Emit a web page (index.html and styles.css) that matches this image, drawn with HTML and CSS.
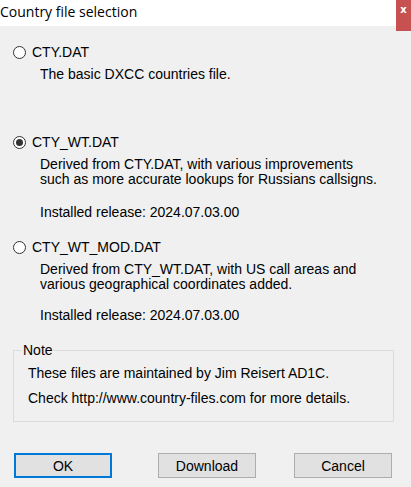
FILE: index.html
```html
<!DOCTYPE html>
<html>
<head>
<meta charset="utf-8">
<link rel="stylesheet" href="styles.css">
</head>
<body>
<div class="window">
  <div class="titlebar">
    <span class="title">Country file selection</span>
    <span class="close">x</span>
  </div>
  <div class="content">
    <div class="option opt1">
      <div class="radio-row"><span class="radio"></span><span class="label">CTY.DAT</span></div>
      <div class="desc">The basic DXCC countries file.</div>
    </div>
    <div class="option opt2">
      <div class="radio-row"><span class="radio checked"></span><span class="label">CTY_WT.DAT</span></div>
      <div class="desc multi">Derived from CTY.DAT, with various improvements<br>such as more accurate lookups for Russians callsigns.</div>
      <div class="desc release r2">Installed release: 2024.07.03.00</div>
    </div>
    <div class="option opt3">
      <div class="radio-row"><span class="radio"></span><span class="label">CTY_WT_MOD.DAT</span></div>
      <div class="desc multi">Derived from CTY_WT.DAT, with US call areas and<br>various geographical coordinates added.</div>
      <div class="desc release r3">Installed release: 2024.07.03.00</div>
    </div>
    <div class="group">
      <span class="legend">Note</span>
      <div class="note">These files are maintained by Jim Reisert AD1C.</div>
      <div class="note note2">Check http://www.country-files.com for more details.</div>
    </div>
    <div class="buttons">
      <button class="btn default">OK</button>
      <button class="btn dl">Download</button>
      <button class="btn cancel">Cancel</button>
    </div>
  </div>
</div>
</body>
</html>
```
FILE: styles.css
```css
html, body {
  margin: 0;
  padding: 0;
  background: #f0f0f0;
}
.window {
  width: 411px;
  height: 487px;
  position: relative;
  font-family: "Liberation Sans", Arial, sans-serif;
  font-size: 14px;
  line-height: 14px;
  color: #000;
}
.titlebar {
  height: 26px;
  background: #fff;
  display: flex;
  align-items: center;
}
.title {
  font-family: "Open Sans", "Noto Sans", sans-serif;
  font-size: 14px;
  line-height: 20px;
  margin-top: -2px;
  color: #000;
}
.close {
  position: absolute;
  top: 0;
  right: 0;
  width: 15px;
  height: 31px;
  background: #c75050;
  color: #fff;
  font-family: "DejaVu Sans", sans-serif;
  font-weight: bold;
  font-size: 10px;
  line-height: 10px;
  text-align: center;
  padding-top: 5px;
  box-sizing: border-box;
}
.content {
  padding-left: 13px;
  display: flex;
  flex-direction: column;
}
.opt1 { margin-top: 19px; }
.opt2 { margin-top: 54px; }
.opt3 { margin-top: 21px; }
.radio-row {
  display: flex;
  align-items: center;
  height: 14px;
}
.radio {
  width: 13px;
  height: 13px;
  box-sizing: border-box;
  border: 1px solid #333;
  border-radius: 50%;
  background: #fff;
  display: flex;
  align-items: center;
  justify-content: center;
}
.radio.checked::after {
  content: "";
  width: 7px;
  height: 7px;
  border-radius: 50%;
  background: #333;
}
.label {
  margin-left: 6px;
}
.desc {
  margin-left: 27px;
  margin-top: 8px;
}
.desc.multi {
  line-height: 15px;
}
.r2 { margin-top: 18px; }
.r3 { margin-top: 16px; }
.group {
  position: relative;
  margin-top: 28px;
  width: 381px;
  box-sizing: border-box;
  border: 1px solid #dcdcdc;
  padding: 15px 0 16px 14px;
}
.legend {
  position: absolute;
  top: -8px;
  left: 8px;
  background: #f0f0f0;
  padding: 0 1px;
}
.note2 { margin-top: 11px; }
.buttons {
  display: flex;
  margin-top: 31px;
  padding-left: 1px;
}
.btn {
  width: 98px;
  height: 25px;
  box-sizing: border-box;
  border: 1px solid #adadad;
  background: #e1e1e1;
  font-family: "Liberation Sans", Arial, sans-serif;
  font-size: 14px;
  color: #000;
  padding: 0;
  margin: 0;
}
.btn.default {
  border: 2px solid #0078d7;
}
.dl { margin-left: 46px; }
.cancel { margin-left: 38px; }
```
